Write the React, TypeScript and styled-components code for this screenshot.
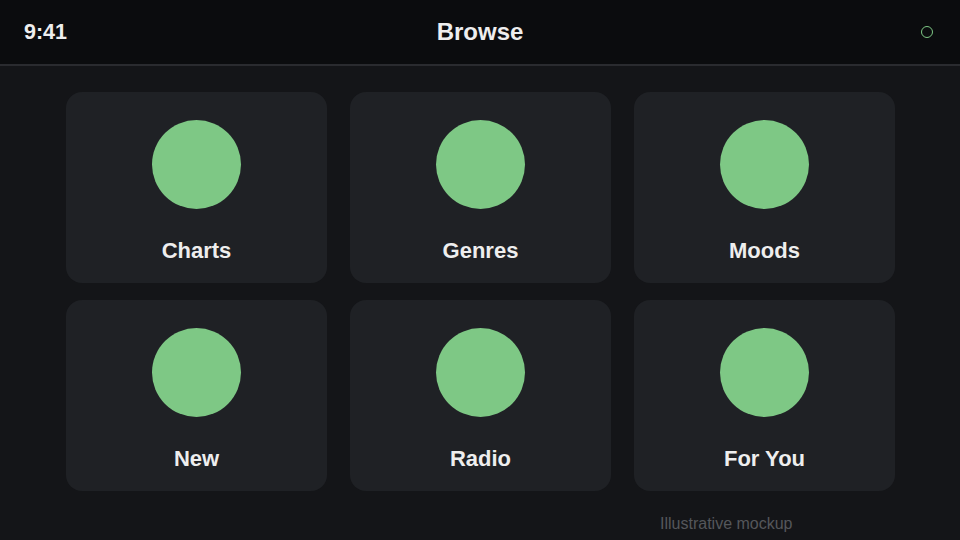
import React from 'react'
import {styled, createGlobalStyle} from 'styled-components'

const GlobalStyle = createGlobalStyle`
    html, body {
        margin: 0;
        padding: 0;
        background: #141518;
        font-family: "Liberation Sans", Arial, sans-serif;
    }
`

const categories = ['Charts', 'Genres', 'Moods', 'New', 'Radio', 'For You']

const App: React.FC = () => {
    return (
        <>
            <GlobalStyle />
            <Screen>
                <Header>
                    <Clock>9:41</Clock>
                    <Title>Browse</Title>
                    <Status />
                </Header>
                <Grid>
                    {categories.map((name) => (
                        <Card key={name}>
                            <Dot />
                            <Label>{name}</Label>
                        </Card>
                    ))}
                </Grid>
                <Note>Illustrative mockup</Note>
            </Screen>
        </>
    )
}

export default App

const Screen = styled.div`
    position: relative;
    width: 960px;
    height: 540px;
    background: #141518;
    overflow: hidden;
`

const Header = styled.header`
    height: 64px;
    display: flex;
    align-items: center;
    justify-content: space-between;
    padding: 0 24px;
    background: #0b0c0e;
    border-bottom: 2px solid #2a2b2f;
`

const Clock = styled.span`
    width: 100px;
    color: #eeeeee;
    font-size: 21.5px;
    font-weight: 700;
`

const Title = styled.h1`
    margin: 0;
    color: #eeeeee;
    font-size: 24px;
    font-weight: 700;
`

const Status = styled.span`
    width: 100px;
    display: flex;
    justify-content: flex-end;
    padding-right: 3px;
    box-sizing: border-box;

    &::after {
        content: '';
        width: 10px;
        height: 10px;
        border: 1.5px solid #7ec885;
        border-radius: 50%;
    }
`

const Grid = styled.main`
    display: grid;
    grid-template-columns: repeat(3, 1fr);
    grid-auto-rows: 191px;
    column-gap: 23px;
    row-gap: 17px;
    padding: 26px 65px 0 66px;
`

const Card = styled.div`
    display: flex;
    flex-direction: column;
    align-items: center;
    padding-top: 28px;
    background: #1f2125;
    border-radius: 16px;
`

const Dot = styled.div`
    width: 89px;
    height: 89px;
    border-radius: 50%;
    background: #7ec885;
`

const Label = styled.div`
    margin-top: 29px;
    color: #eeeeee;
    font-size: 22px;
    font-weight: 700;
`

const Note = styled.div`
    position: absolute;
    left: 660px;
    bottom: 7px;
    color: #55575b;
    font-size: 16px;
`
